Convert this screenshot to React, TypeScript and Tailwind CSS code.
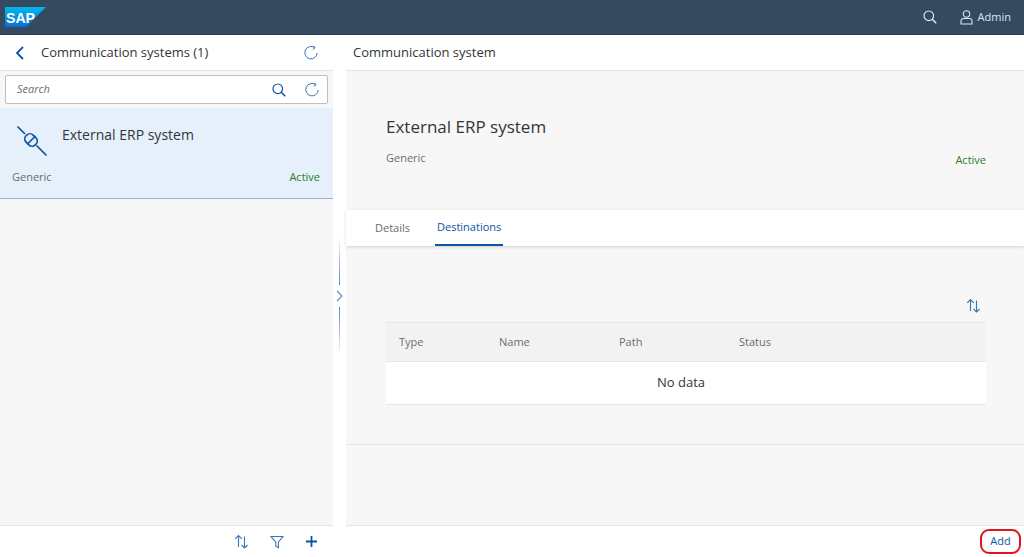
import React from 'react';

const font = "font-['Open_Sans','Noto_Sans',sans-serif]";
const blue = '#0a55a3';

const Refresh = () => (
  <svg width="16" height="16" viewBox="0 0 16 16" fill="none" stroke={blue} strokeWidth="1" className="opacity-80">
    <path d="M11.6 2.6A6.2 6.2 0 1 0 14.2 8" />
    <path d="M10.5 0.8 L12 2.8 L9.8 4.4" />
  </svg>
);

const Search = ({ color = blue, size = 14 }: { color?: string; size?: number }) => (
  <svg width={size} height={size} viewBox="0 0 14 14" fill="none" stroke={color} strokeWidth="1.2">
    <circle cx="5.8" cy="5.8" r="4.8" />
    <path d="M9.3 9.3 L13.2 13.2" strokeWidth="1.6" />
  </svg>
);

const Sort = () => (
  <svg width="15" height="15" viewBox="0 0 15 15" fill="none" stroke={blue} strokeWidth="1.1" className="opacity-80">
    <path d="M4.5 13 V1.5 M1.2 4.8 L4.5 1.5 L7.8 4.8" />
    <path d="M10.5 2.5 V14 M7.5 11 L10.5 14 L13.5 11" />
  </svg>
);

const PlugIcon = () => (
  <svg width="30" height="30" viewBox="0 0 30 30" fill="none" stroke={blue} strokeWidth="1.7" strokeLinecap="round">
    <path d="M1 1 L7.5 7.5" />
    <path d="M20 20 L29 29" />
    <rect x="7.5" y="9" width="13" height="10" rx="4.5" transform="rotate(45 14 14)" />
    <path d="M11 17.5 L18 10.5" />
  </svg>
);

const SapLogo = () => (
  <svg width="41" height="20" viewBox="0 0 41 20">
    <defs>
      <linearGradient id="sapBg" x1="0" y1="0" x2="0" y2="1">
        <stop offset="0" stopColor="#00b8f1" />
        <stop offset="1" stopColor="#0a6ed1" />
      </linearGradient>
    </defs>
    <polygon points="0,0 41,0 21,20 0,20" fill="url(#sapBg)" />
    <text x="1" y="15.5" fill="#fff" fontSize="15" fontWeight="700" fontFamily="Liberation Sans" textLength="29" lengthAdjust="spacingAndGlyphs">
      SAP
    </text>
  </svg>
);

function ListPanel() {
  return (
    <div className="w-[333px] flex flex-col bg-[#f7f7f7]">
      <div className="h-[36px] bg-white border-b border-[#e5e5e5] flex items-center pl-[15px] pr-[14px]">
        <svg width="10" height="14" viewBox="0 0 10 14" fill="none" stroke={blue} strokeWidth="1.8">
          <path d="M8 1 L2 7 L8 13" />
        </svg>
        <span className="ml-[16px] text-[13px] text-[#32363a] flex-1">Communication systems (1)</span>
        <Refresh />
      </div>
      <div className="h-[36px] px-[5px] pt-[4px]">
        <div className="h-[29px] bg-white border border-[#bfbfbf] rounded-[2px] flex items-center pl-[11px] pr-[7px]">
          <span className="text-[11px] italic text-[#6a6d70] flex-1">Search</span>
          <Search />
          <span className="w-[18px]" />
          <Refresh />
        </div>
      </div>
      <div className="h-[91px] bg-[#e5f0fa] border-b border-[#8eb3d6] mt-[1px] px-[12px] pt-[18px] flex flex-col">
        <div className="flex items-start">
          <div className="ml-[5px]">
            <PlugIcon />
          </div>
          <span className="ml-[15px] -mt-[2px] text-[14px] text-[#32363a]">External ERP system</span>
        </div>
        <div className="flex justify-between items-center mt-[13px] text-[11px] pr-[1px]">
          <span className="text-[#6a6d70]">Generic</span>
          <span className="text-[#2b7d2b]">Active</span>
        </div>
      </div>
      <div className="flex-1" />
      <div className="h-[32px] bg-white border-t border-[#e5e5e5] flex items-center justify-end pr-[15px] gap-[21px]">
        <Sort />
        <svg width="14" height="14" viewBox="0 0 14 14" fill="none" stroke={blue} strokeWidth="1.1" className="opacity-80">
          <path d="M1 1.5 H13 L8.4 7 V12.8 L5.8 11 V7 Z" />
        </svg>
        <svg width="13" height="13" viewBox="0 0 13 13" fill="none" stroke={blue} strokeWidth="1.8">
          <path d="M6.5 1 V12 M1 6.5 H12" />
        </svg>
      </div>
    </div>
  );
}

function Divider() {
  return (
    <div className="w-[13px] bg-white flex flex-col items-center pt-[202px]">
      <div className="w-px h-[48px] bg-gradient-to-b from-white to-[#5b84b1]" />
      <svg width="7" height="12" viewBox="0 0 7 12" fill="none" stroke="#5b8fd0" strokeWidth="1.2" className="my-[5px]">
        <path d="M1 1 L6 6 L1 11" />
      </svg>
      <div className="w-px h-[48px] bg-gradient-to-t from-white to-[#5b84b1]" />
    </div>
  );
}

function DetailPanel() {
  return (
    <div className="flex-1 flex flex-col bg-[#f7f7f7]">
      <div className="h-[36px] bg-white border-b border-[#e5e5e5] flex items-center pl-[7px] text-[13px] text-[#32363a]">
        Communication system
      </div>
      <div className="h-[139px] pl-[40px] pr-[38px] pt-[44px]">
        <div className="text-[17px] leading-[23px] text-[#32363a]">External ERP system</div>
        <div className="flex justify-between mt-[12px] text-[11px]">
          <span className="text-[#6a6d70]">Generic</span>
          <span className="text-[#2b7d2b] mt-[2px]">Active</span>
        </div>
      </div>
      <div className="h-[36px] bg-white shadow-[0_1px_3px_rgba(0,0,0,0.15)] flex pl-[29px] gap-[25px] text-[11px] relative">
        <div className="flex items-center text-[#6a6d70]">Details</div>
        <div className="flex items-center text-[#0a55a3] border-b-2 border-[#0a55a3] px-[2px]">Destinations</div>
      </div>
      <div className="h-[199px] border-b border-[#e5e5e5] pl-[40px] pr-[38px] pt-[52px]">
        <div className="flex justify-end pr-[5px] h-[24px]">
          <Sort />
        </div>
        <div className="h-[40px] bg-[#f2f2f2] border-y border-[#e5e5e5] flex items-center text-[11px] text-[#6a6d70]">
          <span className="w-[113px] pl-[13px]">Type</span>
          <span className="w-[120px]">Name</span>
          <span className="w-[120px]">Path</span>
          <span>Status</span>
        </div>
        <div className="h-[43px] bg-white border-b border-[#e5e5e5] flex items-center justify-center text-[13px] text-[#32363a] pr-[10px]">
          No data
        </div>
      </div>
      <div className="flex-1" />
      <div className="h-[32px] bg-white border-t border-[#e5e5e5] flex items-center justify-end pr-[3px]">
        <span className="h-[25px] w-[41px] border-[2px] border-[#e1141e] rounded-[9px] flex items-center justify-center text-[11px] text-[#0a55a3]">
          Add
        </span>
      </div>
    </div>
  );
}

export default function App() {
  return (
    <div className={`w-[1024px] h-[557px] flex flex-col overflow-hidden bg-white ${font}`}>
      <header className="h-[35px] bg-[#354a5f] border-b border-[#2c3e50] flex items-center pl-[5px] pr-[13px] shrink-0">
        <SapLogo />
        <div className="flex-1" />
        <Search color="#d1e8ff" />
        <svg width="13" height="15" viewBox="0 0 13 15" fill="none" stroke="#d1e8ff" strokeWidth="1.1" className="ml-[23px]">
          <circle cx="6.5" cy="4" r="3.2" />
          <path d="M1 14 V10.5 A2.5 2.5 0 0 1 3.5 8.5 H9.5 A2.5 2.5 0 0 1 12 10.5 V14 Z" />
        </svg>
        <span className="ml-[5px] text-[11px] text-[#d1e8ff]">Admin</span>
      </header>
      <div className="flex-1 flex min-h-0">
        <ListPanel />
        <Divider />
        <DetailPanel />
      </div>
    </div>
  );
}
